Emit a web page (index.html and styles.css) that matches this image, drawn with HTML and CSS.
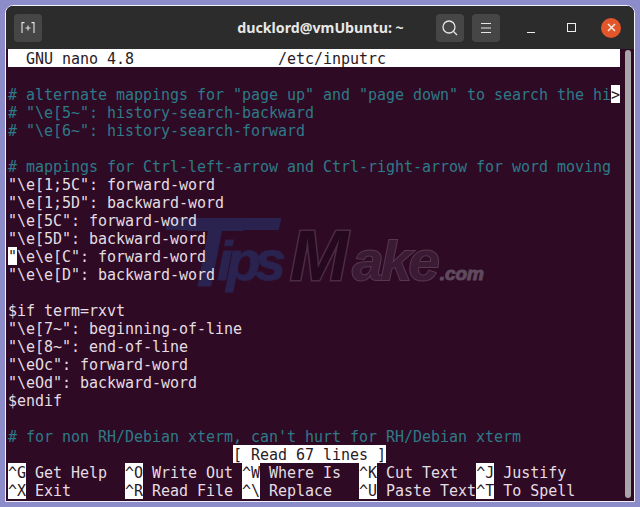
FILE: index.html
```html
<!DOCTYPE html>
<html lang="en">
<head>
<meta charset="utf-8">
<title>nano</title>
<link rel="stylesheet" href="styles.css">
</head>
<body>
<div class="window">
  <header class="titlebar">
    <div class="btn tab-btn">
      <svg width="14" height="11" viewBox="0 0 14 11" fill="none" stroke="#e6e6e6" stroke-width="1.100"><path d="M1 11V.6H3.500M13 11V.6H10.500M7 3.500v5M4.500 6h5"/></svg>
    </div>
    <div class="title">ducklord@vmUbuntu: ~</div>
    <div class="btn search-btn">
      <svg width="16" height="16" viewBox="0 0 16 16" fill="none" stroke="#e6e6e6" stroke-width="1.300"><circle cx="7" cy="7" r="6"/><path d="M11.500 11.500L15 15"/></svg>
    </div>
    <div class="btn menu-btn">
      <svg width="12" height="10" viewBox="0 0 12 10" fill="none" stroke="#e6e6e6" stroke-width="1"><path d="M1 .5h10M1 5h10M1 9.500h10"/></svg>
    </div>
    <div class="wm wm-min"><span class="min-bar"></span></div>
    <div class="wm wm-max"><span class="max-box"></span></div>
    <div class="wm wm-close">
      <span class="close-dot"><svg width="9" height="9" viewBox="0 0 9 9" stroke="#f6e6df" stroke-width="1.600"><path d="M1 1l7 7M8 1l-7 7"/></svg></span>
    </div>
  </header>
  <main class="term">
    <div class="watermark"><span class="w-t">T</span><span class="w-ips">ips</span><span class="w-m">M</span><span class="w-ake">ake</span><span class="w-com">.com</span></div>
    <div class="row inv head">  GNU nano 4.8                /etc/inputrc</div>
    <div class="row"> </div>
    <div class="row c"># alternate mappings for "page up" and "page down" to search the hi<span class="inv">&gt;</span></div>
    <div class="row c"># "\e[5~": history-search-backward</div>
    <div class="row c"># "\e[6~": history-search-forward</div>
    <div class="row"> </div>
    <div class="row c"># mappings for Ctrl-left-arrow and Ctrl-right-arrow for word moving</div>
    <div class="row">"\e[1;5C": forward-word</div>
    <div class="row">"\e[1;5D": backward-word</div>
    <div class="row">"\e[5C": forward-word</div>
    <div class="row">"\e[5D": backward-word</div>
    <div class="row"><span class="inv">"</span>\e\e[C": forward-word</div>
    <div class="row">"\e\e[D": backward-word</div>
    <div class="row"> </div>
    <div class="row">$if term=rxvt</div>
    <div class="row">"\e[7~": beginning-of-line</div>
    <div class="row">"\e[8~": end-of-line</div>
    <div class="row">"\eOc": forward-word</div>
    <div class="row">"\eOd": backward-word</div>
    <div class="row">$endif</div>
    <div class="row"> </div>
    <div class="row c"># for non RH/Debian xterm, can't hurt for RH/Debian xterm</div>
    <div class="row">                         <span class="inv">[ Read 67 lines ]</span></div>
    <div class="row"><span class="inv">^G</span> Get Help  <span class="inv">^O</span> Write Out <span class="inv">^W</span> Where Is  <span class="inv">^K</span> Cut Text  <span class="inv">^J</span> Justify</div>
    <div class="row"><span class="inv">^X</span> Exit      <span class="inv">^R</span> Read File <span class="inv">^\</span> Replace   <span class="inv">^U</span> Paste Text<span class="inv">^T</span> To Spell</div>
    <div class="scrollbar"></div>
  </main>
</div>
</body>
</html>
```
FILE: styles.css
```css
* { box-sizing: border-box; }
html, body { margin: 0; height: 100%; }
body {
  width: 640px;
  height: 507px;
  background: #8c8ccb;
  padding: 5px;
  overflow: hidden;
}
.window {
  width: 630px;
  height: 497px;
  border: 1px solid #f2f2fa;
  border-top-left-radius: 8px;
  border-top-right-radius: 8px;
  display: flex;
  flex-direction: column;
  overflow: hidden;
  background: #2f0a24;
}
.titlebar {
  height: 43px;
  flex: none;
  background: #2c2c2c;
  display: flex;
  align-items: center;
  padding: 0 13px 0 8px;
  color: #e8e8e8;
}
.btn {
  width: 28px;
  height: 28px;
  border-radius: 4px;
  background: #464646;
  display: flex;
  align-items: center;
  justify-content: center;
  flex: none;
}
.title {
  flex: 1;
  text-align: center;
  font: bold 14.200px "Noto Sans", "Open Sans", sans-serif;
  padding-left: 163px;
  white-space: nowrap;
}
.search-btn { margin-right: 8px; }
.wm {
  flex: none;
  display: flex;
  align-items: center;
  justify-content: center;
}
.wm-min { width: 20px; margin-left: 21px; }
.min-bar { width: 8px; height: 1px; background: #eee; margin-top: 9px; }
.wm-max { width: 20px; margin-left: 20px; }
.max-box { width: 9px; height: 9px; border: 1.500px solid #eee; }
.wm-close { width: 20px; margin-left: 20px; }
.close-dot {
  width: 20px;
  height: 20px;
  border-radius: 50%;
  background: #e2562a;
  display: flex;
  align-items: center;
  justify-content: center;
}
.term {
  position: relative;
  flex: 1;
  padding-left: 2px;
  font: 15px/20px "DejaVu Sans Mono", monospace;
  color: #e4dde2;
  background: #2f0a24;
}
.row {
  position: relative;
  height: 18px;
  white-space: pre;
  letter-spacing: -0.03px;
}
.c { color: #2d7a88; }
.inv {
  display: inline-block;
  height: 18px;
  vertical-align: top;
  background: #fff;
  color: #2a1a25;
}
.row.inv { display: block; width: 612px; }
.scrollbar {
  position: absolute;
  right: 3px;
  top: 1px;
  bottom: 3px;
  width: 6px;
  border-radius: 3px;
  background: #a9a5a9;
}
.watermark {
  position: absolute;
  left: 211px;
  top: 172px;
  font: italic bold 70px/70px "Liberation Sans", sans-serif;
  white-space: nowrap;
  pointer-events: none;
}
.watermark::before {
  content: "";
  position: absolute;
  left: -50px;
  top: -3px;
  width: 113px;
  height: 12px;
  background: #2a2350;
  transform: skewX(-12deg);
}
.w-t {
  position: absolute;
  left: -37px;
  top: -15px;
  font-size: 96px;
  line-height: 96px;
  color: #2a2350;
}
.w-ips {
  position: relative;
  font-size: 56px;
  letter-spacing: -6px;
  color: #2a2350;
  margin-right: 10px;
  -webkit-text-stroke: 1px #2a2350;
}
.w-m {
  color: #26081e;
  -webkit-text-stroke: 3px #4a2b46;
  paint-order: stroke fill;
  margin-right: 4px;
}
.w-ake {
  font-size: 56px;
  letter-spacing: -3px;
  color: #3a1a35;
  -webkit-text-stroke: 2px #56384f;
  paint-order: stroke fill;
  margin-right: 3px;
}
.w-com {
  font-size: 19px;
  letter-spacing: 0;
  color: #5f4a5e;
  -webkit-text-stroke: 1px #5f4a5e;
}
```
